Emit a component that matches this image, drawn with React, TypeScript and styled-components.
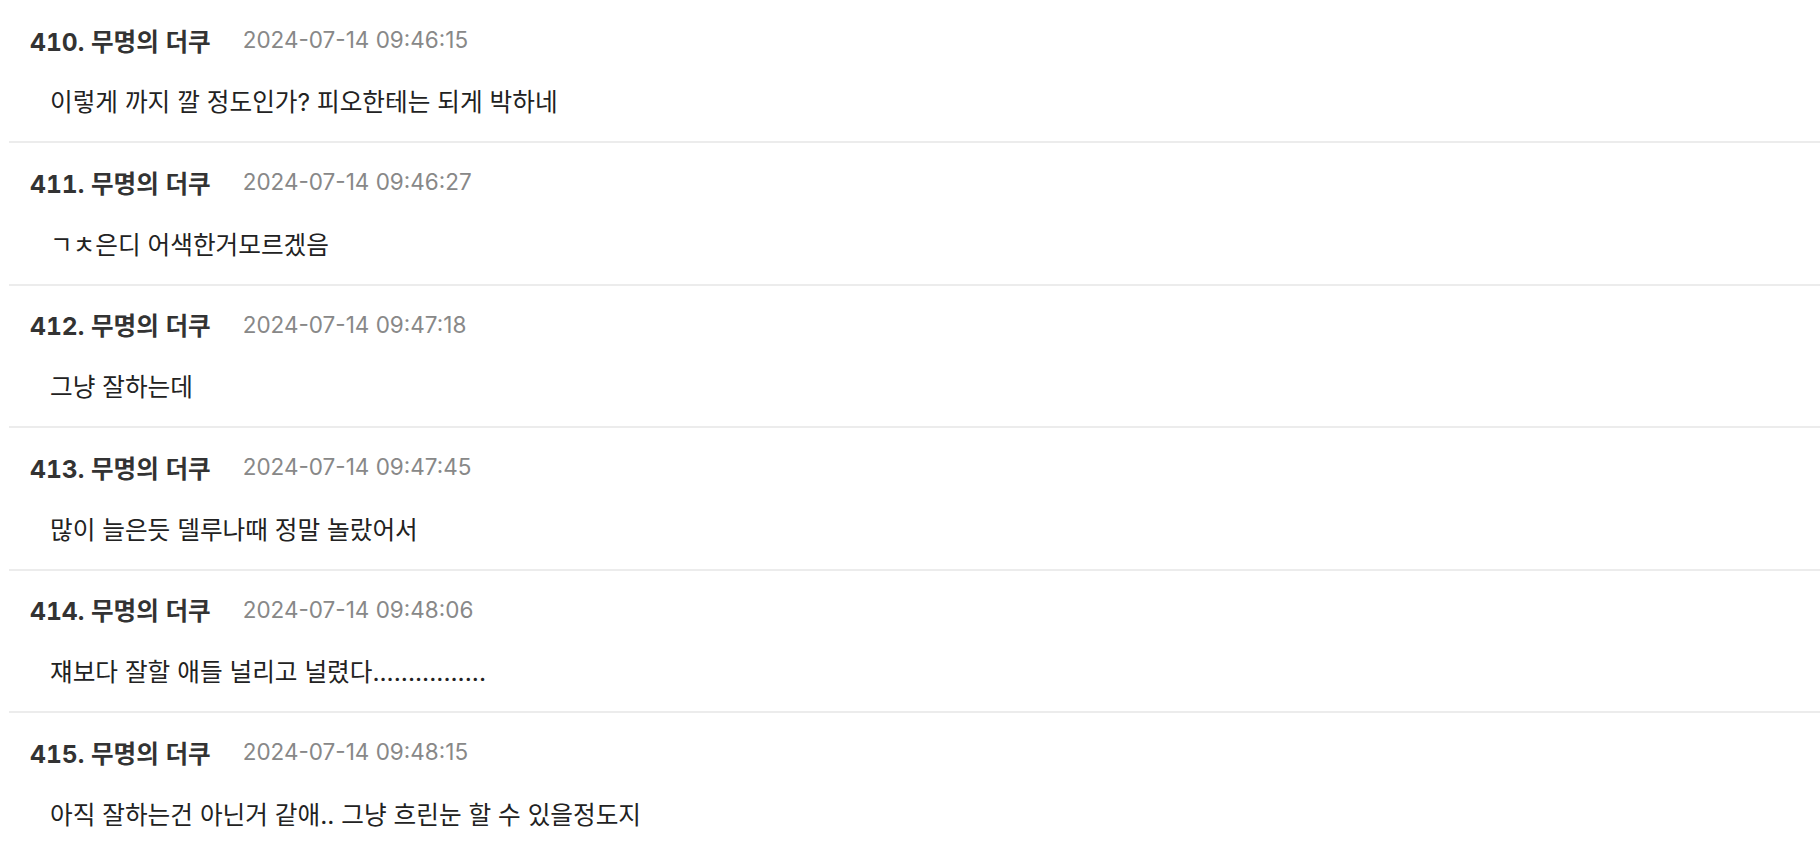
import React from 'react';
import styled, { createGlobalStyle } from 'styled-components';

const GlobalStyle = createGlobalStyle`
  html, body {
    margin: 0;
    padding: 0;
    background: #fff;
  }
  body {
    font-family: Inter, "Noto Sans CJK KR", sans-serif;
    -webkit-font-smoothing: antialiased;
  }
`;

const CommentList = styled.ul`
  list-style: none;
  margin: 0 0 0 9px;
  padding: 1px 0 0;
`;

const CommentItem = styled.li`
  padding: 23px 0 22.2px 21px;
  border-bottom: 2px solid #ececec;
`;

const CommentHeader = styled.div`
  display: flex;
  align-items: center;
  gap: 32px;
  height: 31px;
`;

const Author = styled.span`
  font-size: 24.6px;
  font-weight: 700;
  color: #333;
  font-variant-numeric: tabular-nums;
`;

const Timestamp = styled.span`
  font-size: 22.5px;
  color: #888;
`;

const CommentBody = styled.p`
  margin: 30.3px 0 0 20px;
  font-size: 24.65px;
  line-height: 34px;
  color: #222;
`;

type Comment = {
  no: number;
  date: string;
  text: string;
};

const comments: Comment[] = [
  { no: 410, date: '2024-07-14 09:46:15', text: '이렇게 까지 깔 정도인가? 피오한테는 되게 박하네' },
  { no: 411, date: '2024-07-14 09:46:27', text: 'ㄱㅊ은디 어색한거모르겠음' },
  { no: 412, date: '2024-07-14 09:47:18', text: '그냥 잘하는데' },
  { no: 413, date: '2024-07-14 09:47:45', text: '많이 늘은듯 델루나때 정말 놀랐어서' },
  { no: 414, date: '2024-07-14 09:48:06', text: '쟤보다 잘할 애들 널리고 널렸다................' },
  { no: 415, date: '2024-07-14 09:48:15', text: '아직 잘하는건 아닌거 같애.. 그냥 흐린눈 할 수 있을정도지' },
];

export default function App() {
  return (
    <>
      <GlobalStyle />
      <CommentList>
        {comments.map((c) => (
          <CommentItem key={c.no}>
            <CommentHeader>
              <Author>{c.no}. 무명의 더쿠</Author>
              <Timestamp>{c.date}</Timestamp>
            </CommentHeader>
            <CommentBody>{c.text}</CommentBody>
          </CommentItem>
        ))}
      </CommentList>
    </>
  );
}
